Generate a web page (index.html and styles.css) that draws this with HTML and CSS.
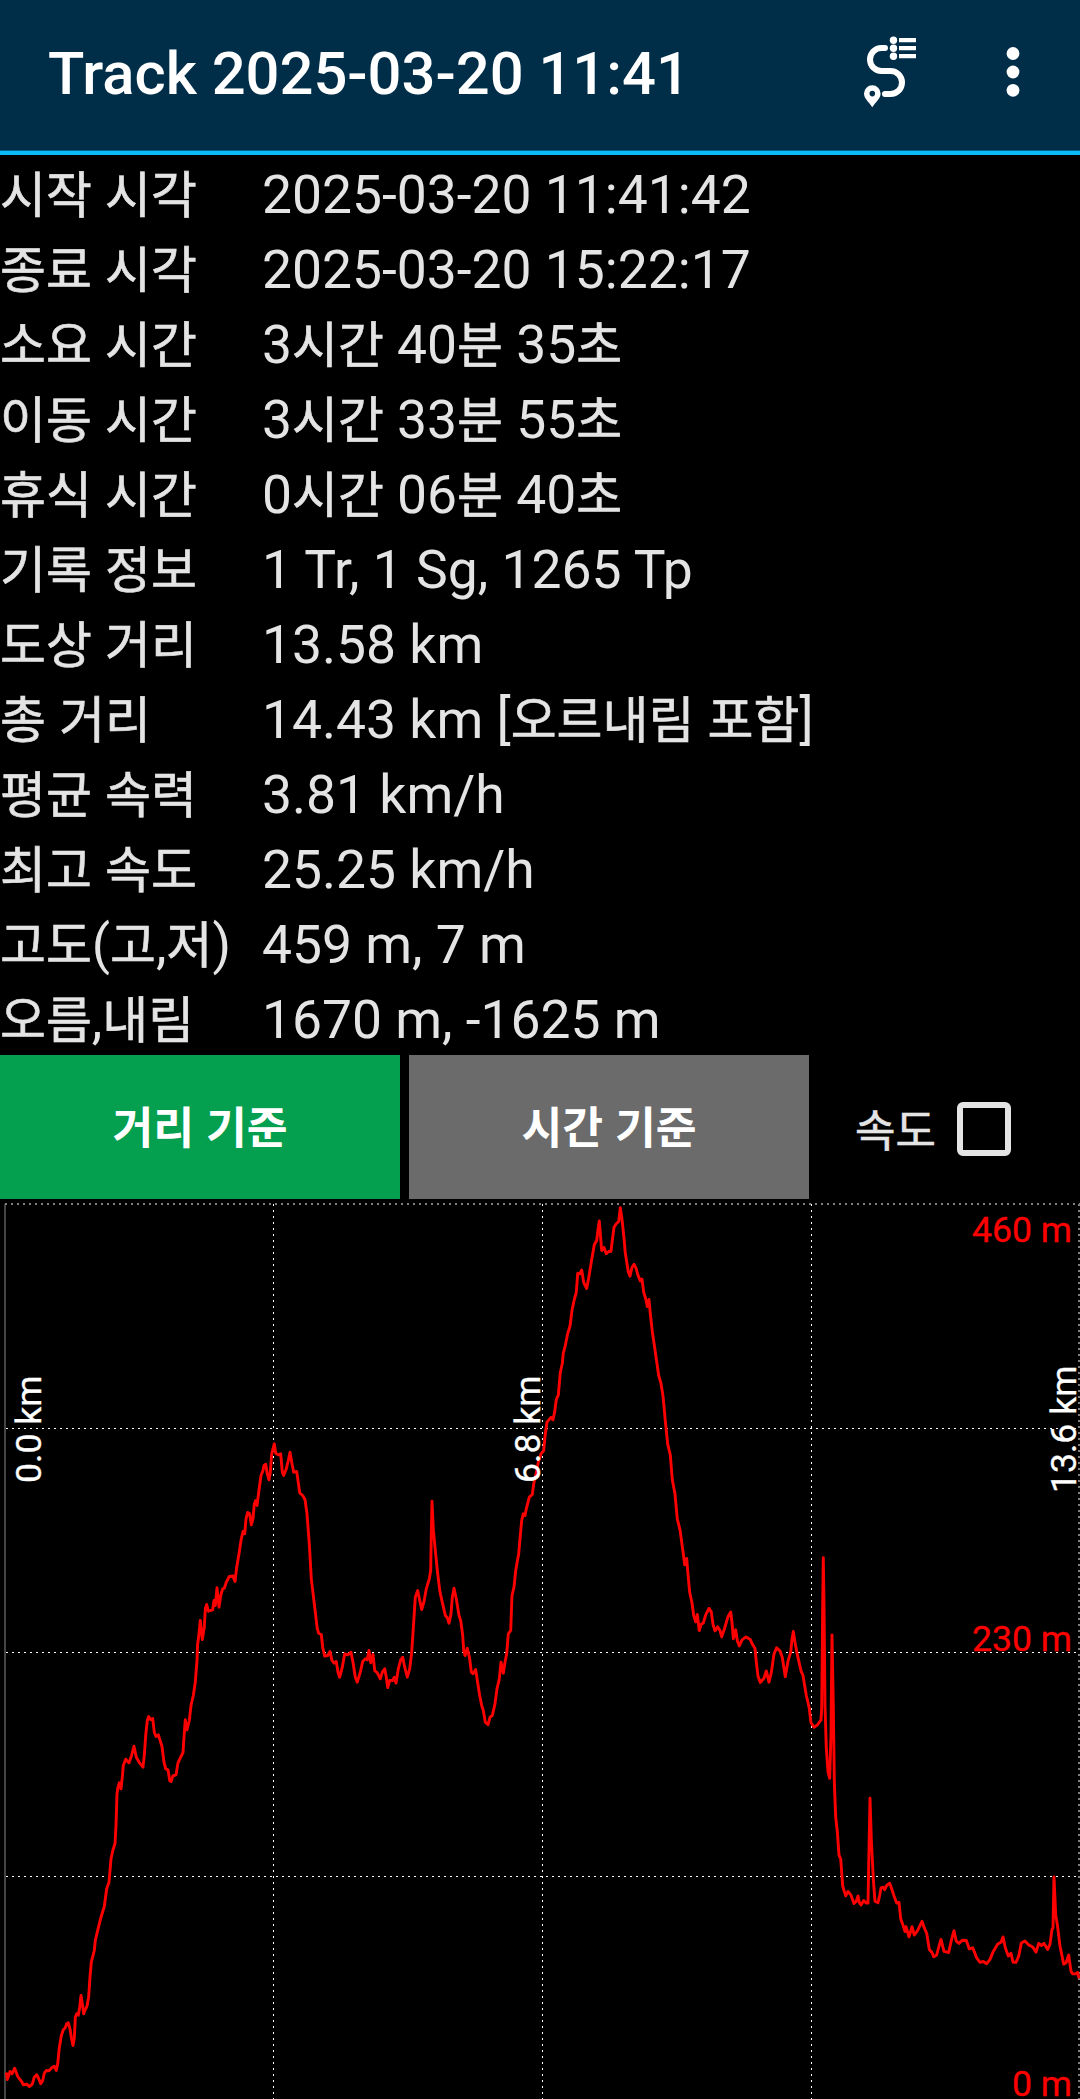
FILE: index.html
```html
<!DOCTYPE html>
<html lang="ko">
<head>
<meta charset="utf-8">
<title>Track 2025-03-20 11:41</title>
<link rel="stylesheet" href="styles.css">
</head>
<body>
<header class="bar">
  <h1 class="title">Track 2025-03-20 11:41</h1>
  <div class="actions">
    <svg class="icon-route" viewBox="0 0 56 74" width="56" height="74">
      <g fill="none" stroke="#fff" stroke-width="6" stroke-linecap="round">
        <path d="M22 13h-3.500a11.500 11.500 0 0 0 0 23h9a11.500 11.500 0 0 1 0 23h-5.500"/>
      </g>
      <g fill="#fff">
        <circle cx="30.500" cy="5.300" r="3.700"/><circle cx="30.500" cy="13.300" r="3.700"/><circle cx="30.500" cy="21.300" r="3.700"/>
        <path d="M36 3h17v4.300H36zM36 11h17v4.300H36zM36 19h17v4.300H36z"/>
        <path fill-rule="evenodd" d="M9.300 50.300a8.300 8.300 0 0 0-8.300 8.300c0 5 4.500 8 8.300 13.700 3.800-5.700 8.300-8.700 8.300-13.700a8.300 8.300 0 0 0-8.300-8.300zm0 5.500a2.800 2.800 0 1 1 0 5.600 2.800 2.800 0 0 1 0-5.600z"/>
      </g>
    </svg>
    <svg class="icon-more" viewBox="0 0 14 50" width="14" height="50" fill="#fff">
      <circle cx="7" cy="6.500" r="6.400"/><circle cx="7" cy="25" r="6.400"/><circle cx="7" cy="43.300" r="6.400"/>
    </svg>
  </div>
</header>
<dl class="stats">
  <div class="row"><dt><span class="ko">시작</span> <span class="ko">시각</span></dt><dd>2025-03-20 11:41:42</dd></div>
  <div class="row"><dt><span class="ko">종료</span> <span class="ko">시각</span></dt><dd>2025-03-20 15:22:17</dd></div>
  <div class="row"><dt><span class="ko">소요</span> <span class="ko">시간</span></dt><dd>3<span class="ko">시간</span> 40<span class="ko">분</span> 35<span class="ko">초</span></dd></div>
  <div class="row"><dt><span class="ko">이동</span> <span class="ko">시간</span></dt><dd>3<span class="ko">시간</span> 33<span class="ko">분</span> 55<span class="ko">초</span></dd></div>
  <div class="row"><dt><span class="ko">휴식</span> <span class="ko">시간</span></dt><dd>0<span class="ko">시간</span> 06<span class="ko">분</span> 40<span class="ko">초</span></dd></div>
  <div class="row"><dt><span class="ko">기록</span> <span class="ko">정보</span></dt><dd>1 Tr, 1 Sg, 1265 Tp</dd></div>
  <div class="row"><dt><span class="ko">도상</span> <span class="ko">거리</span></dt><dd>13.58 km</dd></div>
  <div class="row"><dt><span class="ko">총</span> <span class="ko">거리</span></dt><dd>14.43 km [<span class="ko">오르내림</span> <span class="ko">포함</span>]</dd></div>
  <div class="row"><dt><span class="ko">평균</span> <span class="ko">속력</span></dt><dd>3.81 km/h</dd></div>
  <div class="row"><dt><span class="ko">최고</span> <span class="ko">속도</span></dt><dd>25.25 km/h</dd></div>
  <div class="row"><dt><span class="ko">고도</span>(<span class="ko">고</span>,<span class="ko">저</span>)</dt><dd>459 m, 7 m</dd></div>
  <div class="row"><dt><span class="ko">오름</span>,<span class="ko">내림</span></dt><dd>1670 m, -1625 m</dd></div>
</dl>
<div class="controls">
  <button class="tab tab-on"><span class="ko">거리</span> <span class="ko">기준</span></button>
  <button class="tab"><span class="ko">시간</span> <span class="ko">기준</span></button>
  <label class="speed"><span class="ko">속도</span><span class="box"></span></label>
</div>
<svg class="chart" viewBox="0 1199 1080 900" width="1080" height="900">
  <g class="grid">
    <path class="axis" d="M5 1204V2099"/>
    <path class="edge" d="M5 1204H1080M1079 1204V2099"/>
    <path d="M6 1428.500H1080M6 1652.500H1080M6 1876.500H1080M273.500 1204V2099M542.500 1204V2099M811.500 1204V2099"/>
  </g>
  <polyline class="line" transform="translate(0 0.5)" points="6.3,2072 7.3,2079 10,2071 12,2073.3 14.7,2067.7 17.7,2076 22,2081.7 23.3,2084.3 26.7,2083.7 29.3,2086 32.3,2083.7 34.3,2076.7 36.7,2074.3 38.3,2077.3 40.7,2083.3 42.7,2080 44.3,2072.7 46.3,2070 49,2070.3 51.7,2067.3 54.3,2065.7 56.3,2070 57.7,2063.3 59.3,2047.3 61.3,2035.3 63.3,2029.3 65,2027.7 66.7,2023.3 68.3,2022.3 70,2028.3 71.3,2036.7 73,2045 74.3,2038.3 75.3,2016.7 76.7,2013.3 78.3,2014.7 79.7,2006.7 81,1995 82.3,2003.3 83.7,2013.3 85.3,2009 87,2005.7 88.7,1996 90,1976.7 91.3,1961.7 94.3,1950 95.3,1940 98.3,1927.3 101,1916.7 104.3,1906 106.7,1888.3 109,1881.7 111,1858.3 113,1849.3 115,1843.3 116,1825 117,1793.3 118,1786.7 119.3,1782.3 121,1788.3 122.3,1776.7 123.3,1765 125.7,1758.7 129,1762.3 131.3,1756 134,1745.7 136.3,1756.7 139.7,1762.7 143,1766.7 144.3,1755 145.7,1735 147.3,1720 148.7,1716 150.7,1719.3 152.7,1718 154.3,1731.7 156,1736 158.3,1734.3 162,1746 164,1761.7 165.7,1768.3 168,1769.3 169.7,1780 171,1781 173,1775.3 176,1774.3 178,1762.3 180.7,1756.7 183,1752 184,1736.7 185.3,1719.3 187,1729.3 189.3,1720 191,1705 193.3,1695 195.3,1681.7 197,1660 197.5,1645 199,1633.3 200.3,1620 202.3,1639 204.3,1626.7 205.3,1608.3 206.7,1604 208.3,1610.7 212.7,1609.3 214,1600 215.3,1605 217,1587.3 219,1606.7 220.7,1595 222.7,1588.3 224.3,1587.7 226.3,1581.7 229.3,1576 232.7,1575.3 235,1581 236.7,1566.7 239,1553.3 241.3,1538.3 243,1531 244.7,1533.3 246,1518.3 247.7,1512 249.7,1513.3 251.3,1524.3 253,1518.3 254.3,1503.3 255.7,1500 257,1505 258.7,1491.7 261,1475 263,1470 264,1465 265.7,1463.7 267.3,1473.3 269,1479.3 270.3,1471.7 271.7,1453.3 274.3,1443.3 275.7,1452.7 278.3,1454.3 280.7,1453.3 282.3,1471.7 283.7,1475 286.3,1468.3 288.3,1460 290,1451.7 292,1463.3 293.7,1471.7 296.7,1471 298,1480 299.7,1492.3 302.7,1495 305,1499 307,1513.3 309.3,1543.3 311.3,1578.3 314.7,1606.7 317.3,1628.3 318.7,1632.7 321.3,1634 322.7,1646.7 324.7,1655.7 327.7,1655 330,1651 332,1660 334,1662.7 336.3,1661 338,1671.7 339.7,1676.7 342.3,1666.7 344.7,1653.3 347.7,1654.3 351,1651.7 353,1661.7 355.3,1676.7 357.3,1681.7 360.3,1671.7 362.7,1661 365.3,1658.3 367.3,1659.3 369,1650 370.7,1662.3 373,1654 374.7,1670 377.3,1672.3 380.3,1678.3 382.3,1671.7 384.7,1668.3 386.3,1676.7 387.7,1687 389.7,1680 392.7,1680 394.3,1676.7 396,1682.7 398.3,1668.3 400.7,1659.3 402.7,1656.7 404.7,1666.7 407.3,1676.7 409.7,1668.3 411.7,1651.7 413.7,1621.7 415.3,1596.7 417.7,1590 419.7,1600 421.7,1609 424,1601 426.3,1588.3 429.3,1578.3 430.7,1570 431.3,1533.3 432,1500.7 433.3,1528.3 435.3,1550 437.7,1573.3 440,1591.7 442.7,1603.3 445.3,1615 447.3,1617.3 449,1622.7 451,1613.3 452.3,1596.7 454,1587.7 456.3,1598.3 459,1615 460.7,1620 462.7,1635 463.7,1650 465,1655 467.3,1647.7 469.7,1658.3 471.3,1671.7 473,1673.3 475.7,1669 477.3,1680 479.7,1695 481.7,1705 483.3,1710 485.3,1721.7 488,1724.3 490,1716.7 492.3,1715 495,1703.3 497,1688.3 499.3,1678.3 501,1661.7 503.3,1672.7 505.3,1660 506.7,1653.3 508.3,1633.3 510.7,1630 512,1595 514,1586.7 515.7,1570 518.7,1553.3 520.3,1535 521.7,1520 523.3,1513.3 525,1515 526.3,1508.3 529.3,1496.7 532.3,1494 533.7,1483.3 536.7,1470 538.3,1461.7 541,1453.3 543.7,1450 545.3,1433.3 547,1421.7 551,1416.8 553,1419.3 554.7,1411.4 556.3,1399 558.3,1394.6 560.3,1372 562.3,1363 563.3,1352.5 565.3,1345 567.7,1333 570,1325.7 572,1309.6 574.3,1299 576.3,1291.8 577.7,1272.9 580,1273.2 581.7,1269.6 583.7,1282 586.7,1288 589,1275.7 591.3,1261.4 594.3,1244.3 596.7,1240 598,1229.3 599.3,1220.4 600.3,1232.9 601.7,1250 604,1247 606.3,1253.2 608.7,1251 611,1250.7 612.3,1240 614,1226.8 616.3,1223.2 618.7,1221 620.3,1207.1 622,1218.6 623.7,1234.6 625.3,1252.5 627,1263.2 628.3,1271.4 630,1275.7 632,1266.8 634,1263.9 636,1267.5 637.7,1273.9 640.3,1280.4 642,1278.6 643.7,1291.8 645.7,1298.2 647.3,1306 649,1299 650.3,1313.2 652.3,1331 655.7,1354.3 658.7,1375 661,1382.9 663,1395.4 665.3,1420.4 667.7,1443.6 670.3,1454.3 672.3,1479.3 675,1493.6 677.3,1518.6 680,1529.3 682.7,1549 684.7,1564.3 686.7,1557.9 688,1574 689.7,1591.8 692,1602.5 693.7,1615 695.7,1621.4 697.3,1614 699.3,1630 701,1624 703.3,1622.5 705.7,1614.3 709,1607.9 711.3,1611.4 713,1624 715,1630.4 717.7,1626.4 720,1630 721.7,1636.4 724.7,1627.5 727.7,1616.8 730.7,1611.4 732,1622 733.3,1638.2 735.7,1629.3 737.3,1640 739.3,1645.4 742,1639.3 746,1636.4 750.3,1639 752.3,1643.6 755,1647.9 756.3,1661.4 758,1675.7 760.3,1682 764,1677.7 766.3,1670.4 769,1681.7 771.3,1672.2 774,1653.4 776.7,1647.2 780,1650.5 782.3,1657 785.3,1676.2 788,1660.6 790.7,1651.6 792,1638.9 793.3,1630.9 795,1641.8 797,1652.6 801,1670.4 803,1675 806.3,1695 809.3,1707.8 811,1722.3 814,1726.7 817.3,1724.5 821,1719.4 821.7,1707.8 822.7,1602.6 823.3,1557.2 824,1602.6 825,1704 826.3,1747.7 828,1771.3 829.7,1777.8 831,1733 832,1634.5 833.3,1704 834.3,1780.4 835.7,1816.6 837.3,1831 839,1854.7 840.7,1858.4 842.7,1885.6 845.7,1895.4 848,1891 851,1894.7 854,1903 856.3,1900.8 858,1895.4 859.3,1901.9 861,1904.5 863.7,1900 866.3,1902.6 868,1902.6 868.7,1863.8 870,1797.8 871.3,1838.4 873.3,1878.3 875,1900.8 878,1902.3 879.7,1894.7 881,1887.4 883.3,1886.7 884.7,1889.2 886.7,1884.9 889.7,1882.7 892,1889.2 894,1895.4 896.7,1902.6 899,1901.9 900.7,1918.2 903.3,1925.5 905,1931 906,1926.2 909,1936.4 912,1926.2 914.3,1934.6 917.7,1929.9 922,1920.8 924,1926.6 926.7,1932.8 929.3,1949 932,1952 933.7,1956.3 936.7,1954.5 939,1945.5 941,1938.9 944,1950.9 948.7,1952 951.3,1940 954,1930.2 956.3,1940.7 959,1942.9 962.3,1939.7 966.3,1940 969.3,1948.4 972.7,1947.3 976.7,1957.4 980,1961.8 983.3,1961 986.7,1963.2 990,1958.9 993.3,1950.9 997.7,1943.6 1001,1941.8 1003,1936.4 1005.3,1947.3 1008.3,1955.6 1011,1952.7 1013,1961.8 1016,1961.8 1018.7,1955.6 1021.3,1942.6 1025,1940.4 1028.7,1944.4 1032.7,1946.5 1036,1951.6 1038.7,1942.9 1041.3,1945 1044,1942.9 1047.7,1949 1050,1943.6 1052,1929 1053,1927.3 1054,1876.5 1055.7,1914.6 1057.3,1923.7 1060,1945.5 1063.7,1963.6 1066,1962.5 1068.7,1954.5 1071,1970.9 1072.7,1973.4 1075.3,1973.4 1077.7,1972 1079,1978"/>
  <g class="alt">
    <text x="1072" y="1242">460 m</text>
    <text x="1072" y="1651">230 m</text>
    <text x="1072" y="2095.500">0 m</text>
  </g>
  <g class="dist">
    <text transform="translate(41 1483) rotate(-90)">0.0 km</text>
    <text transform="translate(540 1483) rotate(-90)">6.8 km</text>
    <text transform="translate(1076 1493) rotate(-90)">13.6 km</text>
  </g>
</svg>
</body>
</html>
```
FILE: styles.css
```css
* { box-sizing: border-box; }

body {
  margin: 0;
  width: 1080px;
  background: #000;
  color: #e4e4e4;
  font-family: Roboto, "Noto Sans CJK KR", sans-serif;
}

.ko {
  font-family: "Noto Sans CJK KR", sans-serif;
  font-size: 0.935em;
  line-height: 1;
  -webkit-text-stroke: 0.6px currentColor;
}

.bar {
  display: flex;
  align-items: flex-start;
  justify-content: space-between;
  height: 155px;
  padding-left: 48px;
  padding-right: 60px;
  background: #002e48;
  border-bottom: 4px solid #0abdf8;
  box-shadow: inset 0 -1px #04608c;
}

.title {
  margin: 39px 0 0;
  color: #fff;
  font-size: 59.7px;
  font-weight: 500;
  line-height: 70px;
}

.actions { display: flex; gap: 87px; }
.icon-route { margin-top: 35px; }
.icon-more { margin-top: 47px; }

.stats { margin: 0; }

.row {
  display: grid;
  grid-template-columns: 262px 1fr;
  height: 75px;
  font-size: 53.4px;
  line-height: 79px;
  white-space: nowrap;
}

.row dt, .row dd { margin: 0; }

.controls { display: flex; height: 144px; }

.tab {
  width: 400px;
  margin: 0 9px 0 0;
  padding: 2px 0 0;
  border: 0;
  background: #6b6b6b;
  color: #fff;
  font: bold 47.5px Roboto, "Noto Sans CJK KR", sans-serif;
}

.tab .ko { -webkit-text-stroke: 0; }

.tab-on { background: #04a04f; }

.speed {
  display: flex;
  align-items: center;
  gap: 21px;
  padding: 4px 0 0 37px;
  font-size: 47px;
}

.box {
  width: 54px;
  height: 54px;
  border: 6px solid #e4e4e4;
  border-radius: 6px;
}

.chart { display: block; }

.grid path { fill: none; stroke: #fff; stroke-width: 1; stroke-dasharray: 2 4; }
.grid .edge { stroke: #808080; stroke-width: 2; }
.grid .axis { stroke: #444; stroke-width: 2; stroke-dasharray: none; }

.line { fill: none; stroke: #f00; stroke-width: 2.9; stroke-linejoin: round; }

.alt, .dist { font-size: 35.6px; }
.alt { fill: #f00; stroke: #f00; stroke-width: 0.3; text-anchor: end; }
.dist { fill: #fff; stroke: #fff; stroke-width: 0.3; }
```
